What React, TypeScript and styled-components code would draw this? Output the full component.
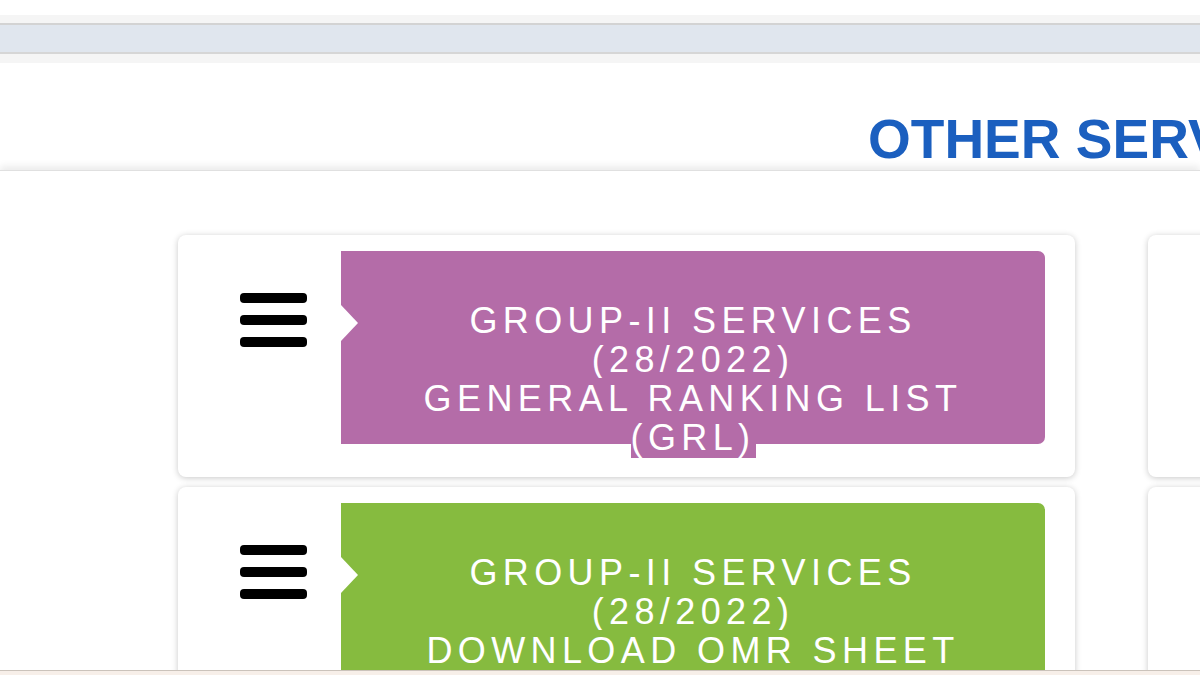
import React from "react";
import styled, { createGlobalStyle } from "styled-components";

const GlobalStyle = createGlobalStyle`
  html, body {
    margin: 0;
    padding: 0;
    background: #ffffff;
    overflow: hidden;
  }

  body {
    font-family: "Liberation Sans", Arial, sans-serif;
  }
`;

const Page = styled.div`
  width: 1200px;
  height: 675px;
  display: flex;
  flex-direction: column;
  overflow: hidden;
  background: #ffffff;
`;

const TopBand = styled.div`
  margin-top: 15px;
  padding: 8px 0 9px;
  background: #f5f5f5;
`;

const AddressBar = styled.div`
  height: 27px;
  background: #e0e6ee;
  border-top: 2px solid #d3d3d3;
  border-bottom: 2px solid #d6d6d6;
`;

const HeadingArea = styled.div`
  padding: 49px 0 4px 868px;
  white-space: nowrap;
`;

const Heading = styled.h2`
  margin: 0;
  font-family: "Liberation Sans", Arial, sans-serif;
  font-size: 55px;
  line-height: 54px;
  font-weight: 700;
  color: #1b5fbf;
`;

const Main = styled.div`
  flex: 1;
  min-height: 0;
  overflow: hidden;
  border-top: 1px solid #e0e0e0;
  box-shadow: 0 -4px 7px rgba(0, 0, 0, 0.08);
  padding: 64px 0 0 178px;
`;

const CardGrid = styled.div`
  display: grid;
  grid-template-columns: 897px 897px;
  column-gap: 73px;
  row-gap: 10px;
`;

const Card = styled.div`
  height: 242px;
  box-sizing: border-box;
  display: flex;
  padding: 16px 30px 0 0;
  background: #ffffff;
  border-radius: 8px;
  box-shadow: 0 1px 6px rgba(0, 0, 0, 0.22);
`;

const IconCol = styled.div`
  width: 163px;
  flex: none;
  box-sizing: border-box;
  padding: 42px 0 0 62px;
`;

const TitleBox = styled.div<{ $bg: string }>`
  position: relative;
  flex: 1;
  height: 193px;
  box-sizing: border-box;
  padding-top: 50px;
  background: ${(p) => p.$bg};
  border-radius: 0 7px 7px 0;
  text-align: center;

  &::before {
    content: "";
    position: absolute;
    left: 0;
    top: 54px;
    width: 0;
    height: 0;
    border-top: 18px solid transparent;
    border-bottom: 18px solid transparent;
    border-left: 17px solid #ffffff;
  }
`;

const TitleText = styled.span<{ $bg: string }>`
  background: ${(p) => p.$bg};
  color: #ffffff;
  font-family: "Liberation Sans", Arial, sans-serif;
  font-size: 36px;
  line-height: 39px;
  letter-spacing: 0.15em;
`;

const Bars = () => (
  <svg width="67" height="54" viewBox="0 0 67 54">
    <rect x="0" y="0" width="67" height="10" rx="4" fill="#000" />
    <rect x="0" y="22" width="67" height="10" rx="4" fill="#000" />
    <rect x="0" y="44" width="67" height="10" rx="4" fill="#000" />
  </svg>
);

type Service = { lines: string[]; color: string };

// right-hand column lies past the window edge, only its card frames show
const services: Service[] = [
  {
    lines: ["GROUP-II SERVICES", "(28/2022)", "GENERAL RANKING LIST", "(GRL)"],
    color: "#b46ca8",
  },
  { lines: [], color: "#3d8fd1" },
  {
    lines: ["GROUP-II SERVICES", "(28/2022)", "DOWNLOAD OMR SHEET"],
    color: "#86bb3f",
  },
  { lines: [], color: "#e08a3c" },
];

const ServiceCard = ({ item }: { item: Service }) => (
  <Card>
    <IconCol>
      <Bars />
    </IconCol>
    <TitleBox $bg={item.color}>
      <TitleText $bg={item.color}>
        {item.lines.map((line, i) => (
          <React.Fragment key={i}>
            {i > 0 && <br />}
            {line}
          </React.Fragment>
        ))}
      </TitleText>
    </TitleBox>
  </Card>
);

const Footer = styled.div`
  height: 4px;
  flex: none;
  border-top: 1px solid #cbc3bb;
  background: #f7efe9;
`;

const App = () => {
  return (
    <Page>
      <GlobalStyle />
      <TopBand>
        <AddressBar />
      </TopBand>
      <HeadingArea>
        <Heading>OTHER SERVICES</Heading>
      </HeadingArea>
      <Main>
        <CardGrid>
          {services.map((s, i) => (
            <ServiceCard key={i} item={s} />
          ))}
        </CardGrid>
      </Main>
      <Footer />
    </Page>
  );
};

export default App;
